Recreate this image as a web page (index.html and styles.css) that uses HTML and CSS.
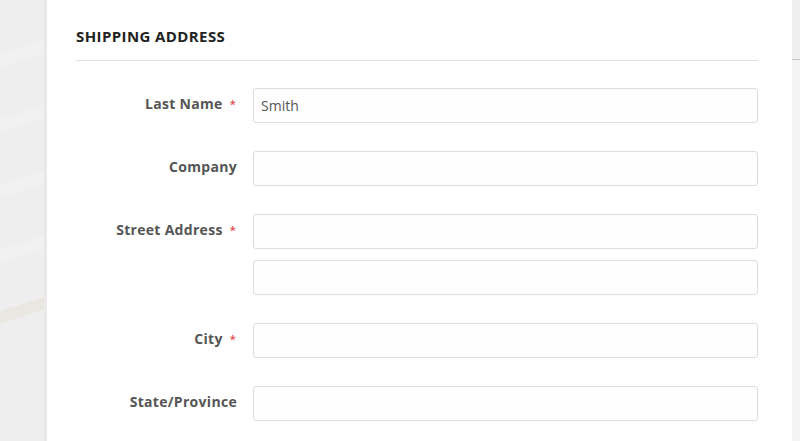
FILE: index.html
```html
<!DOCTYPE html>
<html lang="en">
<head>
<meta charset="utf-8">
<title>Shipping Address</title>
<link rel="stylesheet" href="styles.css">
</head>
<body>
<div class="page">
  <div class="backdrop"></div>
  <main class="panel">
    <h2 class="title">SHIPPING ADDRESS</h2>
    <form class="form">
      <div class="row">
        <label class="label required">Last Name</label>
        <div class="control"><input class="input" type="text" value="Smith"></div>
      </div>
      <div class="row">
        <label class="label">Company</label>
        <div class="control"><input class="input" type="text"></div>
      </div>
      <div class="row">
        <label class="label required">Street Address</label>
        <div class="control">
          <input class="input" type="text">
          <input class="input" type="text">
        </div>
      </div>
      <div class="row">
        <label class="label required">City</label>
        <div class="control"><input class="input" type="text"></div>
      </div>
      <div class="row">
        <label class="label">State/Province</label>
        <div class="control"><input class="input" type="text"></div>
      </div>
    </form>
  </main>
  <aside class="sidebar"></aside>
</div>
</body>
</html>
```

FILE: styles.css
```css
html, body {
  margin: 0;
  padding: 0;
  height: 100%;
  overflow: hidden;
}
body {
  background: #efefef;
  font-family: "Open Sans", "Liberation Sans", sans-serif;
}
.page {
  display: flex;
  height: 441px;
}
.backdrop {
  width: 44px;
  flex: none;
  border-right: 3px solid #e9e9e9;
  background:
    linear-gradient(162deg, transparent 0 296px, #eae6e1 296px 308px, transparent 308px),
    linear-gradient(162deg, transparent 0 238px, #f1f1f1 238px 250px, transparent 250px),
    linear-gradient(162deg, transparent 0 176px, #f1f1f1 176px 188px, transparent 188px),
    linear-gradient(162deg, transparent 0 114px, #f1f1f1 114px 126px, transparent 126px),
    linear-gradient(162deg, transparent 0 52px, #f1f1f1 52px 64px, transparent 64px),
    #eeeeee;
}
.panel {
  width: 682px;
  flex: none;
  background: #ffffff;
  padding: 0 34px 0 29px;
}
.title {
  margin: 0;
  padding: 26px 0 14px;
  line-height: 20px;
  font-size: 15px;
  font-weight: 700;
  letter-spacing: 0.4px;
  color: #222222;
  border-bottom: 1px solid #e2e2e2;
}
.form {
  padding-top: 27px;
}
.row {
  display: grid;
  grid-template-columns: 161px 1fr;
  column-gap: 16px;
  margin-bottom: 28px;
}
.label {
  text-align: right;
  line-height: 32px;
  font-size: 14px;
  font-weight: 700;
  letter-spacing: 0.3px;
  color: #555555;
}
.label.required::after {
  content: "*";
  color: #e4474a;
  font-size: 11px;
  font-weight: 600;
  margin-left: 7px;
  margin-right: 1px;
  vertical-align: 1px;
}
.control {
  display: flex;
  flex-direction: column;
  gap: 11px;
}
.input {
  box-sizing: border-box;
  height: 35px;
  width: 100%;
  margin: 0;
  padding: 0 7px;
  border: 1px solid #dddddd;
  border-radius: 3px;
  background: #fefefe;
  font-family: "Open Sans", "Liberation Sans", sans-serif;
  font-size: 14px;
  color: #555555;
  outline: none;
}
.sidebar {
  flex: 1;
  margin-top: 59px;
  background: #f4f4f4;
  border-top: 1px solid #c8c8c8;
}
```
